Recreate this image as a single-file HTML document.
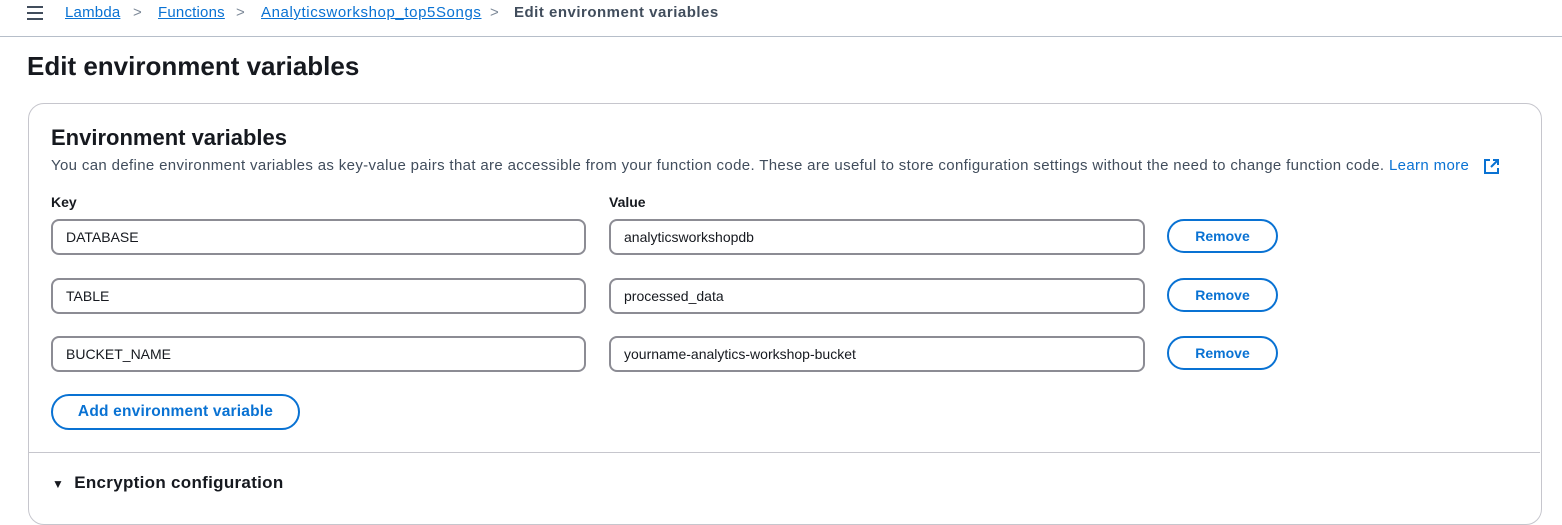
<!DOCTYPE html><html><head><style>
body{margin:0;width:1562px;height:497px;overflow:hidden;background:#fff;font-family:"Liberation Sans",sans-serif;color:#16191f;position:relative}
.a{position:absolute}
.bc{top:0;left:0;right:0;height:36px;border-bottom:1px solid #b6bec9}
.bc span{position:absolute;top:4px;font-size:15px;letter-spacing:0.2px}
.lnk{color:#0972d3;text-decoration:underline}
.chev{color:#7d8998}
.card{left:28px;top:103px;width:1512px;height:420px;border:1px solid #c6c6cd;border-radius:16px}
.inp{border:2px solid #8c8c94;border-radius:8px;box-sizing:border-box;height:36px;font-size:14px;line-height:32px;padding-left:13px}
.btn{border:2px solid #0972d3;border-radius:18px;color:#0972d3;font-weight:bold;font-size:14px;text-align:center;box-sizing:border-box}
</style></head><body>
<div class="a bc">
<div class="a" style="left:27px;top:6px;width:16px">
<div style="height:2px;background:#414d5c;margin:0 0 4px"></div><div style="height:2px;background:#414d5c;margin:0 0 4px"></div><div style="height:2px;background:#414d5c"></div></div>
<span class="lnk" style="left:65px">Lambda</span><span class="chev" style="left:133px">&gt;</span>
<span class="lnk" style="left:158px">Functions</span><span class="chev" style="left:236px">&gt;</span>
<span class="lnk" style="left:261px;letter-spacing:0.6px">Analyticsworkshop_top5Songs</span><span class="chev" style="left:490px">&gt;</span>
<span style="left:514px;font-weight:bold;color:#414d5c;letter-spacing:0.5px">Edit environment variables</span>
</div>
<div class="a" style="left:27px;top:51px;font-size:26px;font-weight:bold">Edit environment variables</div>
<div class="a card"></div>
<div class="a" style="left:51px;top:125px;font-size:22px;font-weight:bold">Environment variables</div>
<div class="a" style="left:51px;top:157px;font-size:15px;letter-spacing:0.35px;color:#414d5c;white-space:nowrap">You can define environment variables as key-value pairs that are accessible from your function code. These are useful to store configuration settings without the need to change function code. <span style="color:#0972d3">Learn more</span></div>
<svg class="a" style="left:1483px;top:158px" width="17" height="17" viewBox="0 0 17 17"><path d="M7 2H2v13h13v-5M10 2h5v5M15 2L8 9" fill="none" stroke="#0972d3" stroke-width="2"/></svg>
<div class="a" style="left:51px;top:194px;font-size:14px;font-weight:bold">Key</div>
<div class="a" style="left:609px;top:194px;font-size:14px;font-weight:bold">Value</div>
<div class="a inp" style="left:51px;top:219px;width:535px">DATABASE</div>
<div class="a inp" style="left:609px;top:219px;width:536px">analyticsworkshopdb</div>
<div class="a btn" style="left:1167px;top:219px;width:111px;height:34px;line-height:30px">Remove</div>
<div class="a inp" style="left:51px;top:278px;width:535px">TABLE</div>
<div class="a inp" style="left:609px;top:278px;width:536px">processed_data</div>
<div class="a btn" style="left:1167px;top:278px;width:111px;height:34px;line-height:30px">Remove</div>
<div class="a inp" style="left:51px;top:336px;width:535px">BUCKET_NAME</div>
<div class="a inp" style="left:609px;top:336px;width:536px">yourname-analytics-workshop-bucket</div>
<div class="a btn" style="left:1167px;top:336px;width:111px;height:34px;line-height:30px">Remove</div>
<div class="a btn" style="left:51px;top:394px;width:249px;height:36px;line-height:32px;font-size:15.5px;letter-spacing:0.2px">Add environment variable</div>
<div class="a" style="left:29px;top:452px;width:1511px;height:1px;background:#c6c6cd"></div>
<div class="a" style="left:52px;top:473px;font-size:17px;font-weight:bold;letter-spacing:0.3px"><span style="font-size:12px">&#9660;</span>&nbsp; Encryption configuration</div>
</body></html>
